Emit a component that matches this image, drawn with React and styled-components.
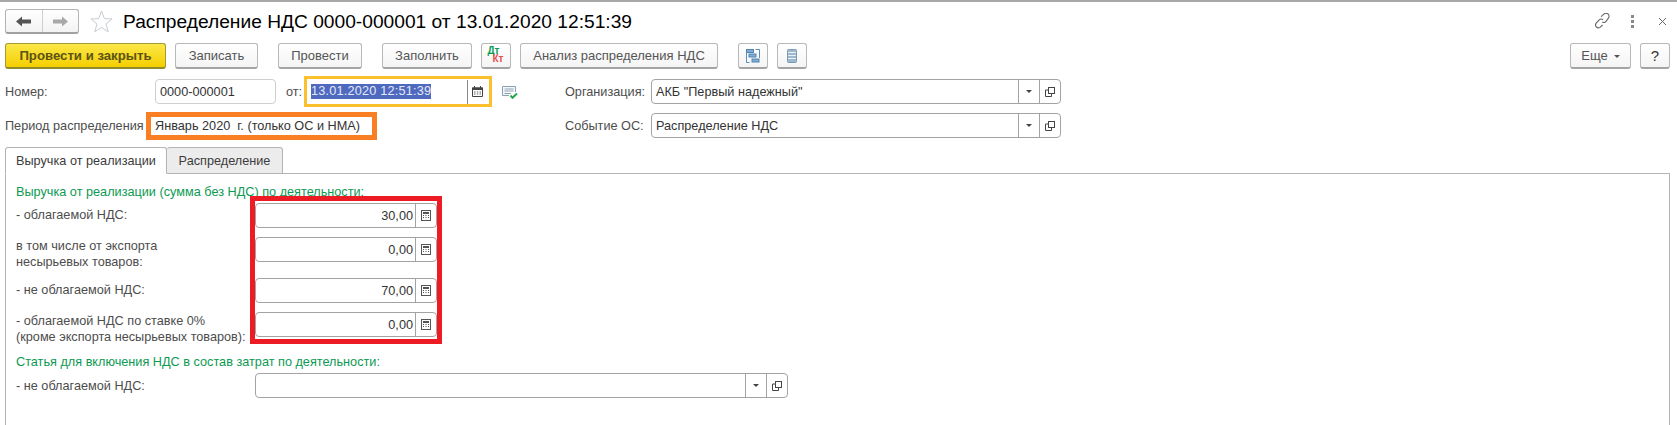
import React from "react";
import styled, { createGlobalStyle } from "styled-components";

const Global = createGlobalStyle`
  html, body { margin: 0; padding: 0; background: #fff; }
  body { font-family: "Liberation Sans", Arial, sans-serif; font-size: 12.7px; color: #4b4b4b; }
  * { box-sizing: border-box; }
`;

const Page = styled.div`
  width: 1677px; height: 425px; overflow: hidden; background: #fff;
  border-top: 2px solid #a8a8a8; display: flex; flex-direction: column;
`;
const TitleBar = styled.div`
  height: 41px; padding: 7px 0 0 5px; display: flex; align-items: flex-start;
`;
const NavGroup = styled.div`
  width: 74px; height: 25px; display: flex; border: 1px solid #b4b4b4; border-bottom: 2px solid #a2a2a2;
  border-radius: 3px; background: linear-gradient(#fff, #f3f3f3);
`;
const NavCell = styled.div`
  flex: 1; display: flex; align-items: center; justify-content: center;
  & + & { border-left: 1px solid #cfcfcf; }
`;
const StarWrap = styled.div`
  margin: 1px 10px 0 11px; width: 23px; height: 23px; display: flex;
`;
const Title = styled.div`
  font-size: 19.2px; line-height: 26px; color: #000; white-space: nowrap; flex: 1;
`;
const TopIcons = styled.div`
  display: flex; align-items: center; height: 24px;
`;
const TopIcon = styled.div`
  width: 30px; display: flex; justify-content: center; align-items: center; height: 24px;
`;

const CommandBar = styled.div`
  height: 26px; padding: 0 7px 0 5px; display: flex; align-items: flex-start;
`;
const Btn = styled.div`
  width: ${p => p.$w}px; margin-right: ${p => p.$mr || 0}px; height: 26px;
  display: flex; align-items: center; justify-content: center; white-space: nowrap;
  border: 1px solid ${p => p.$primary ? "#a39a33" : "#b8b8b8"};
  border-bottom: 2px solid ${p => p.$primary ? "#8f8a2c" : "#a4a4a4"};
  border-radius: 3px; font-size: 13px; color: #555;
  font-weight: ${p => p.$primary ? 700 : 400};
  background: ${p => p.$primary ? "linear-gradient(#fbe74a, #f5cf00)" : "linear-gradient(#fff, #f4f4f4)"};
  ${p => p.$primary && "font-size: 13.2px; color: #5c5314;"}
`;
const Spacer = styled.div` flex: 1; `;
const Caret = styled.span`
  display: inline-block; margin-left: 6px; margin-top: 2px; width: 0; height: 0;
  border-left: 3px solid transparent; border-right: 3px solid transparent; border-top: 3px solid #555;
`;
const DtKtMark = styled.span`
  display: inline-flex; flex-direction: column; font-weight: 700; font-size: 10px; line-height: 8px; width: 17px; margin-top: -1px;
`;
const Dt = styled.span` color: #0b9a52; `;
const Kt = styled.span` color: #e8504c; margin-left: 5px; `;
const HelpMark = styled.span` color: #333; font-size: 15px; `;

const HeadForm = styled.div`
  padding: 6px 0 0 5px; display: grid; row-gap: 1px;
  grid-template-columns: 560px 496px; grid-auto-rows: 33px;
`;
const HeadCell = styled.div` display: flex; align-items: center; `;
const Label = styled.div`
  font-size: 12.7px; color: #4d4d4d; white-space: nowrap; width: ${p => p.$w}px; flex: none;
`;
const Input = styled.div`
  width: ${p => p.$w}px; height: 25px; border: 1px solid #cfcfcf; border-radius: 4px; display: flex; align-items: center;
  padding-left: 4px; color: #333;
`;
const OtLabel = styled(Label)` margin-left: 10px; `;
const DateBox = styled.div`
  width: 188px; height: 31px; border: 3px solid #fbc02d; display: flex; align-items: center; padding-left: 4px;
`;
const Selected = styled.span`
  background: #4f69bf; color: #e4e9f7; letter-spacing: 0.2px; line-height: 15px; white-space: nowrap;
`;
const CalCell = styled.div`
  margin-left: auto; width: 20px; height: 24px; border-left: 1px solid #8a8a8a; margin-right: 2px;
  display: flex; align-items: center; justify-content: center;
`;
const DocIcon = styled.div` margin: 2px 0 0 10px; display: flex; `;
const OrangeBox = styled.div`
  width: 231px; height: 28px; border: 5px solid #f97e24; display: flex; align-items: center; padding-left: 4px;
  color: #333; white-space: pre;
`;
const Field = styled.div`
  width: ${p => p.$w}px; height: 25px; border: 1px solid #a3a3a3; border-radius: 4px; display: flex; align-items: stretch; background: #fff;
`;
const FieldText = styled.div`
  flex: 1; display: flex; align-items: center; padding: 0 ${p => p.$right ? 2 : 4}px 0 4px; color: #333;
  justify-content: ${p => p.$right ? "flex-end" : "flex-start"}; white-space: nowrap;
`;
const FieldBtn = styled.div`
  width: 21px; border-left: 1px solid #a3a3a3; display: flex; align-items: center; justify-content: center;
`;
const SelectCaret = styled.span`
  width: 0; height: 0; border-left: 3px solid transparent; border-right: 3px solid transparent; border-top: 3px solid #444;
`;

const Tabs = styled.div`
  margin: 5px 0 0 5px; display: flex; height: 27px; width: 1665px; border-bottom: 1px solid #b4b4b4;
`;
const Tab = styled.div`
  width: ${p => p.$w}px; height: 27px; border: 1px solid #b4b4b4; border-radius: 3px 3px 0 0;
  background: ${p => p.$active ? "#fff" : "#ececec"}; display: flex; align-items: center; justify-content: center;
  color: #3c3c3c; border-left-width: ${p => p.$active ? 1 : 0}px;
  ${p => p.$active && "height: 27px; border-bottom-color: #fff;"}
`;
const Panel = styled.div`
  position: relative; margin-left: 5px; width: 1665px; flex: 1;
  border: 1px solid #b4b4b4; border-width: 0 1px; padding: 10px 0 0 10px;
`;
const Section = styled.div`
  color: #0c9a52; line-height: 16px; white-space: nowrap; margin-bottom: 3px;
`;
const Rows = styled.div`
  display: grid; grid-template-columns: 239px 1fr; align-items: start;
`;
const RowLabel = styled.div`
  line-height: 16px; color: #4d4d4d; white-space: pre-line; padding-top: ${p => p.$pt}px;
  height: ${p => p.$h}px;
`;
const RedFrame = styled.div`
  position: absolute; left: 244px; top: 22px; width: 192px; height: 148px; border: 5px solid #ed1c24; pointer-events: none;
`;

const Arrow = ({ color, flip }) => (
  <svg width="15" height="11" viewBox="0 0 15 11">
    <path d={flip ? "M15 5.5 L9 0.5 V3.5 H0 V7.5 H9 V10.5 Z" : "M0 5.5 L6 0.5 V3.5 H15 V7.5 H6 V10.5 Z"} fill={color} />
  </svg>
);
const Star = () => (
  <svg width="23" height="23" viewBox="0 0 23 23">
    <path d="M11.5 1 L14.4 8.6 L22 9 L16 14 L18.2 21.8 L11.5 17.4 L4.8 21.8 L7 14 L1 9 L8.6 8.6 Z" fill="none" stroke="#c8ccd0" />
  </svg>
);
const LinkIcon = () => (
  <svg width="16" height="16" viewBox="0 0 16 16" fill="none" stroke="#666" strokeWidth="1.1">
    <path d="M7 3.6 L9.6 1.4 A2.6 2.6 0 0 1 14.4 5.2 L11.8 8.6 A2.4 2.4 0 0 1 8.4 9" />
    <path d="M9 7 A2.4 2.4 0 0 0 5.2 7 L2 10.4 A2.9 2.9 0 0 0 6 14.4 L8.6 12" />
  </svg>
);
const Dots = () => (
  <svg width="3" height="13" viewBox="0 0 3 13">
    <g fill="#888"><rect width="3" height="3" /><rect y="5" width="3" height="3" /><rect y="10" width="3" height="3" /></g>
  </svg>
);
const Close = () => (
  <svg width="9" height="9" viewBox="0 0 9 9"><path d="M1 1 L8 8 M8 1 L1 8" stroke="#666" /></svg>
);
const Structure = () => (
  <svg width="14" height="14" viewBox="0 0 14 14">
    <path d="M0.5 4 V13.5 H3.5 M9.5 0.5 H13.5 V9" fill="none" stroke="#5b8fba" />
    <rect x="0.5" y="0.5" width="7" height="3" fill="#86abcb" stroke="#4f86b5" />
    <rect x="3" y="5" width="7" height="3" fill="#86abcb" stroke="#4f86b5" />
    <rect x="6" y="10" width="7" height="3" fill="#86abcb" stroke="#4f86b5" />
  </svg>
);
const ListIcon = () => (
  <svg width="10" height="14" viewBox="0 0 10 14">
    <rect x="0.5" y="0.5" width="9" height="13" rx="1" fill="#9db8cf" stroke="#7d9ab5" />
    <path d="M1 3.5 H9 M1 6.5 H9 M1 9.5 H9" stroke="#e8eff5" />
  </svg>
);
const Calendar = () => (
  <svg width="11" height="11" viewBox="0 0 11 11">
    <path d="M0.5 2 H10.5 V10.5 H0.5 Z" fill="#fff" stroke="#444" />
    <rect y="1.5" width="11" height="2.5" fill="#444" />
    <path d="M2.5 0 V2 M8.5 0 V2" stroke="#444" />
    <path d="M2 6 H3.5 M4.8 6 H6.3 M7.5 6 H9 M2 8 H3.5 M4.8 8 H6.3 M7.5 8 H9" stroke="#666" />
  </svg>
);
const Posted = () => (
  <svg width="16" height="13" viewBox="0 0 16 13">
    <path d="M0.5 0.5 H13.5 V6 M7 9.5 H0.5 V0.5" fill="#f4f7fa" stroke="#8aa0b3" />
    <path d="M2.5 3 H11.5 M2.5 5 H11.5 M2.5 7.5 H9" stroke="#8aa0b3" />
    <path d="M8.5 9.5 L10.5 11.8 L15 7.5" fill="none" stroke="#27a84f" strokeWidth="2" />
  </svg>
);
const Calc = () => (
  <svg width="10" height="11" viewBox="0 0 10 11">
    <rect x="0.5" y="0.5" width="9" height="10" fill="#fff" stroke="#555" />
    <rect x="2" y="2" width="6" height="2" fill="#555" />
    <path d="M2 5.5 H3 M4.5 5.5 H5.5 M7 5.5 H8 M2 7.5 H3 M4.5 7.5 H5.5 M7 7.5 H8" stroke="#555" />
  </svg>
);
const OpenIcon = () => (
  <svg width="10" height="10" viewBox="0 0 10 10" fill="none" stroke="#444">
    <rect x="3.5" y="0.5" width="6" height="6" />
    <path d="M3.5 3 H0.5 V9.5 H6.5 V6.5" />
  </svg>
);

const PickField = ({ w, children }) => (
  <Field $w={w}>
    <FieldText>{children}</FieldText>
    <FieldBtn><SelectCaret /></FieldBtn>
    <FieldBtn><OpenIcon /></FieldBtn>
  </Field>
);
const NumField = ({ value }) => (
  <Field $w={182}>
    <FieldText $right>{value}</FieldText>
    <FieldBtn><Calc /></FieldBtn>
  </Field>
);

export default function App() {
  return (
    <Page>
      <Global />
      <TitleBar>
        <NavGroup>
          <NavCell><Arrow color="#555" /></NavCell>
          <NavCell><Arrow flip color="#a8a8a8" /></NavCell>
        </NavGroup>
        <StarWrap><Star /></StarWrap>
        <Title>Распределение НДС 0000-000001 от 13.01.2020 12:51:39</Title>
        <TopIcons>
          <TopIcon><LinkIcon /></TopIcon>
          <TopIcon><Dots /></TopIcon>
          <TopIcon><Close /></TopIcon>
        </TopIcons>
      </TitleBar>
      <CommandBar>
        <Btn $primary $w={161} $mr={9}>Провести и закрыть</Btn>
        <Btn $w={83} $mr={20}>Записать</Btn>
        <Btn $w={84} $mr={20}>Провести</Btn>
        <Btn $w={90} $mr={9}>Заполнить</Btn>
        <Btn $w={30} $mr={9}><DtKtMark><Dt>Дт</Dt><Kt>Кт</Kt></DtKtMark></Btn>
        <Btn $w={198} $mr={20}>Анализ распределения НДС</Btn>
        <Btn $w={30} $mr={9}><Structure /></Btn>
        <Btn $w={30}><ListIcon /></Btn>
        <Spacer />
        <Btn $w={61} $mr={9}>Еще<Caret /></Btn>
        <Btn $w={30}><HelpMark>?</HelpMark></Btn>
      </CommandBar>
      <HeadForm>
        <HeadCell>
          <Label $w={150}>Номер:</Label>
          <Input $w={121}>0000-000001</Input>
          <OtLabel $w={18}>от:</OtLabel>
          <DateBox>
            <Selected>13.01.2020 12:51:39</Selected>
            <CalCell><Calendar /></CalCell>
          </DateBox>
          <DocIcon><Posted /></DocIcon>
        </HeadCell>
        <HeadCell>
          <Label $w={86}>Организация:</Label>
          <PickField w={410}>АКБ "Первый надежный"</PickField>
        </HeadCell>
        <HeadCell>
          <Label $w={141}>Период распределения</Label>
          <OrangeBox>Январь 2020  г. (только ОС и НМА)</OrangeBox>
        </HeadCell>
        <HeadCell>
          <Label $w={86}>Событие ОС:</Label>
          <PickField w={410}>Распределение НДС</PickField>
        </HeadCell>
      </HeadForm>
      <Tabs>
        <Tab $active $w={162}>Выручка от реализации</Tab>
        <Tab $w={116}>Распределение</Tab>
      </Tabs>
      <Panel>
        <RedFrame />
        <Section>Выручка от реализации (сумма без НДС) по деятельности:</Section>
        <Rows>
          <RowLabel $h={34} $pt={4}>- облагаемой НДС:</RowLabel>
          <NumField value="30,00" />
          <RowLabel $h={41} $pt={1}>{"в том числе от экспорта\nнесырьевых товаров:"}</RowLabel>
          <NumField value="0,00" />
          <RowLabel $h={34} $pt={4}>- не облагаемой НДС:</RowLabel>
          <NumField value="70,00" />
          <RowLabel $h={42} $pt={1}>{"- облагаемой НДС по ставке 0%\n(кроме экспорта несырьевых товаров):"}</RowLabel>
          <NumField value="0,00" />
        </Rows>
        <Section>Статья для включения НДС в состав затрат по деятельности:</Section>
        <Rows>
          <RowLabel $h={34} $pt={5}>- не облагаемой НДС:</RowLabel>
          <PickField w={533} />
        </Rows>
      </Panel>
    </Page>
  );
}
